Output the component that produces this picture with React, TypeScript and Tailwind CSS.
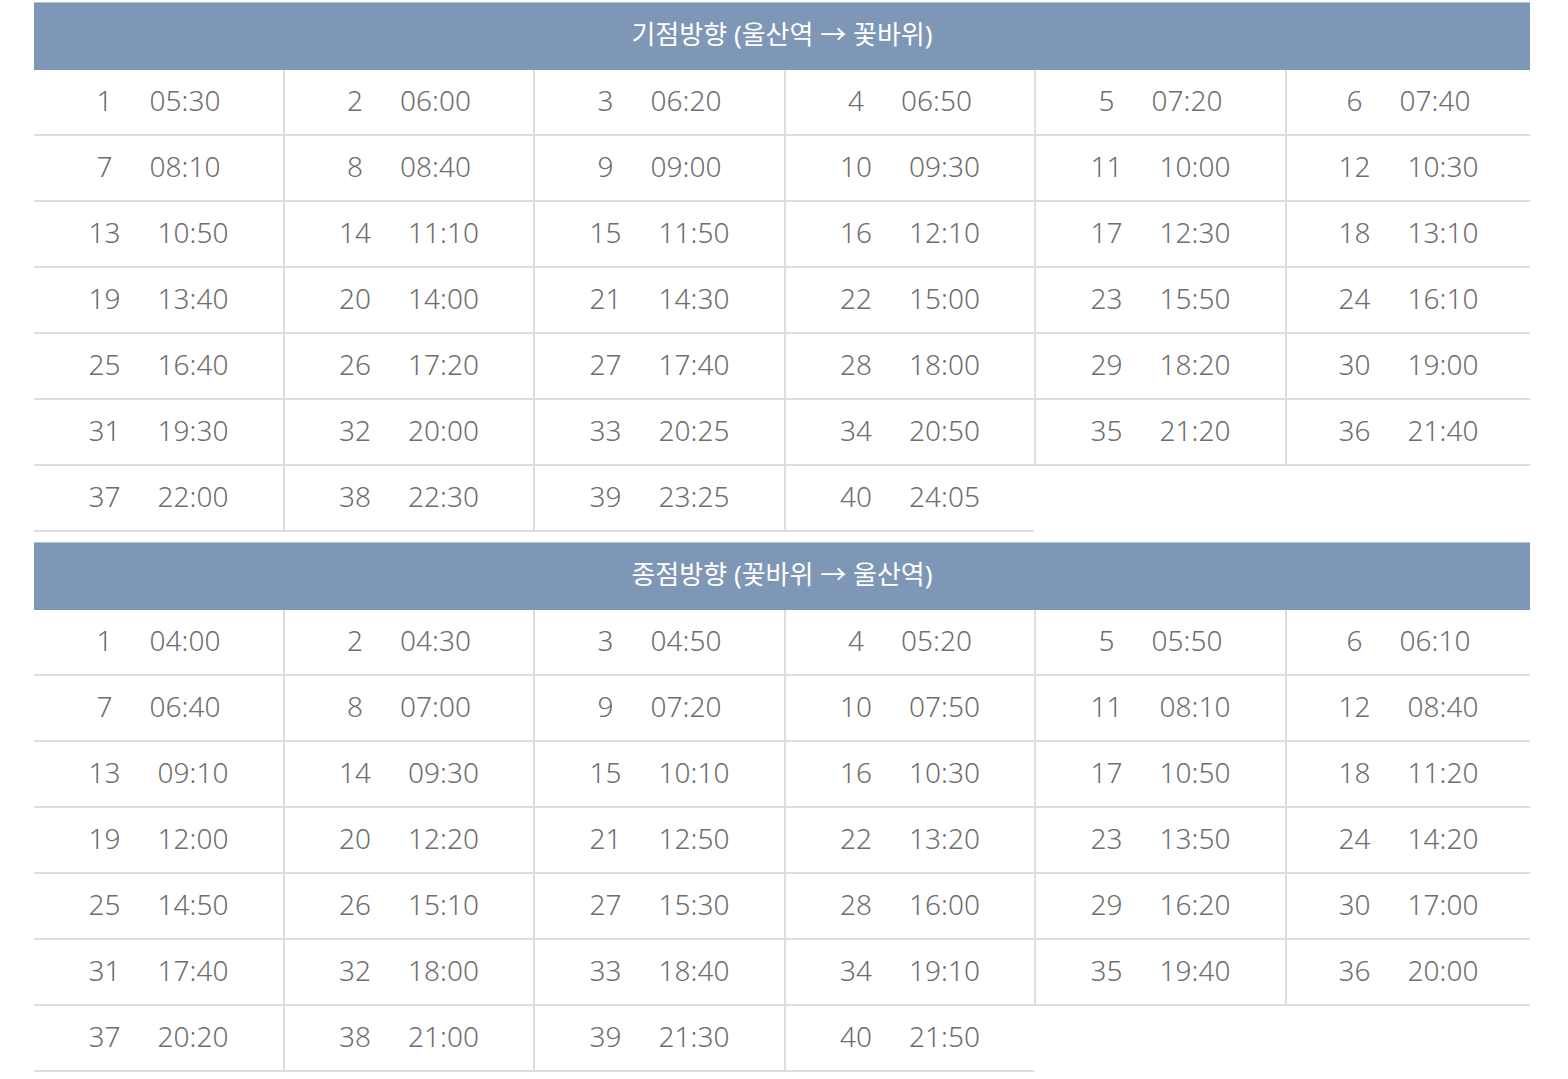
import React from "react";

const t1 = [
  "05:30","06:00","06:20","06:50","07:20","07:40",
  "08:10","08:40","09:00","09:30","10:00","10:30",
  "10:50","11:10","11:50","12:10","12:30","13:10",
  "13:40","14:00","14:30","15:00","15:50","16:10",
  "16:40","17:20","17:40","18:00","18:20","19:00",
  "19:30","20:00","20:25","20:50","21:20","21:40",
  "22:00","22:30","23:25","24:05",
];
const t2 = [
  "04:00","04:30","04:50","05:20","05:50","06:10",
  "06:40","07:00","07:20","07:50","08:10","08:40",
  "09:10","09:30","10:10","10:30","10:50","11:20",
  "12:00","12:20","12:50","13:20","13:50","14:20",
  "14:50","15:10","15:30","16:00","16:20","17:00",
  "17:40","18:00","18:40","19:10","19:40","20:00",
  "20:20","21:00","21:30","21:50",
];

function Table({ title, times }: { title: React.ReactNode; times: string[] }) {
  return (
    <div className="w-[1496px]">
      <div className="h-[68px] border-t border-[#b4c2d4] bg-[#7f97b6] flex items-center justify-center pb-[4px] text-white text-[26px]">
        {title}
      </div>
      <div className="grid grid-cols-[249px_250px_251px_250px_251px_245px]">
        {times.map((t, i) => (
          <div
            key={i}
            className={
              "h-[66px] border-b-2 border-[#dcdcdc] flex items-center justify-center gap-[37px] pb-[4px] text-[28px] font-light text-[#6e6e6e] " +
              (i % 6 === 0 ? "" : "border-l-2")
            }
          >
            <span>{i + 1}</span>
            <span>{t}</span>
          </div>
        ))}
      </div>
    </div>
  );
}

export default function App() {
  return (
    <div
      className="w-[1568px] h-[1079px] bg-white pl-[34px] pt-[2px] flex flex-col gap-[10px] overflow-hidden"
      style={{ fontFamily: '"Noto Sans", "Noto Sans CJK KR", sans-serif' }}
    >
      <Table title={<span>기점방향 (울산역 → 꽃바위)</span>} times={t1} />
      <Table title={<span>종점방향 (꽃바위 → 울산역)</span>} times={t2} />
    </div>
  );
}
